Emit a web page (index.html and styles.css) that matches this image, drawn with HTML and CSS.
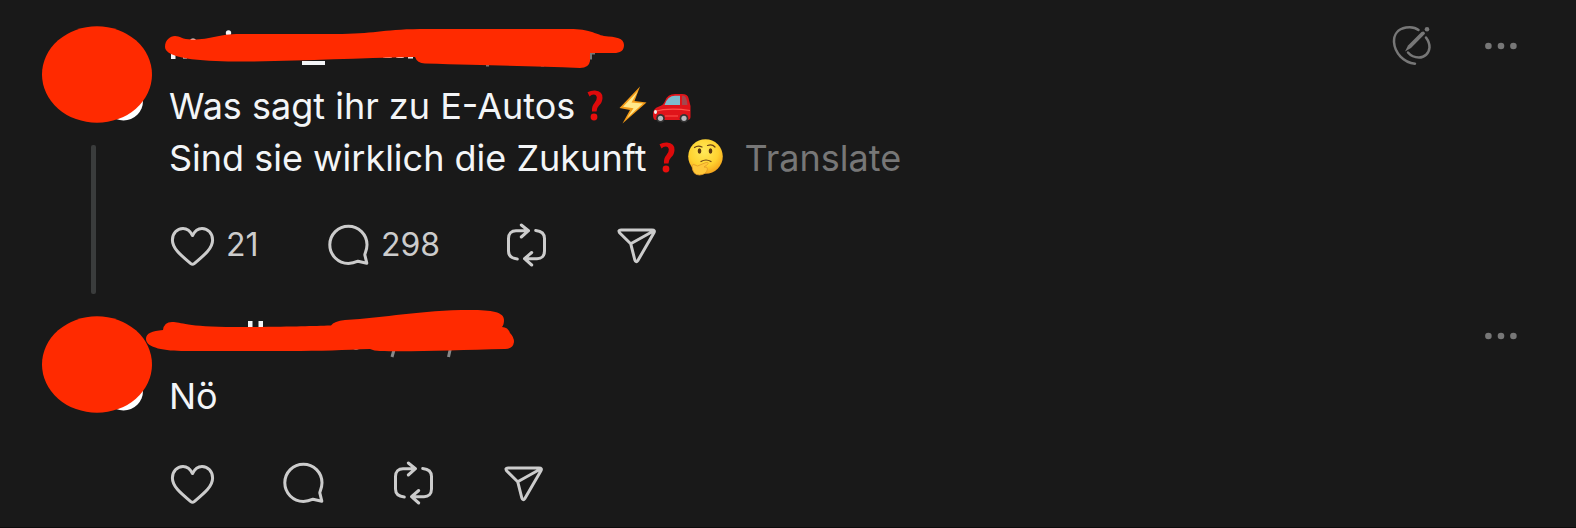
FILE: index.html
```html
<!DOCTYPE html>
<html lang="de">
<head>
<meta charset="utf-8">
<meta name="viewport" content="width=device-width, initial-scale=1">
<title>Thread</title>
<link rel="stylesheet" href="styles.css">
</head>
<body>
<svg class="defs" aria-hidden="true">
  <symbol id="heart" viewBox="0 0 48 48"><path d="M23.500 13.500C21.500 9.300 18 6.400 14 6.400C8 6.400 3.400 11.500 3.400 18C3.400 26 10.500 32.200 21.800 41.600Q23.500 43 25.200 41.600C36.500 32.200 43.600 26 43.600 18C43.600 11.500 39 6.400 33 6.400C29 6.400 25.500 9.300 23.500 13.500Z"/></symbol>
  <symbol id="comment" viewBox="0 0 48 48"><path d="M42.8 41.2L40.8 32.8C41 31 43 28 43 22.8A18.6 18.6 0 1 0 24.4 41.4C28 41.4 31 40.5 34 39.2Z"/></symbol>
  <symbol id="repost" viewBox="0 0 48 48"><path d="M15.300 37C10 36.500 6.500 34 6.500 29V16.500C6.500 11.500 9.500 8.700 14 8.700H26M19.300 3L26.500 8.700L19.300 15M33.700 8.500C39 9 42.500 11.500 42.500 16.500V29C42.500 34 39.500 36.700 35 36.700H23M29.700 30.500L22.500 36.700L29.700 43"/></symbol>
  <symbol id="share" viewBox="0 0 48 48"><path d="M7.800 11Q5.600 8 9 8H40Q43.600 8 41.800 11L26 38.300Q23.800 41.300 22.700 37.500L18.700 21.700ZM18.700 21.700L41.500 9"/></symbol>
  <symbol id="more" viewBox="0 0 48 48"><circle cx="11.400" cy="24" r="3.300"/><circle cx="24" cy="24" r="3.300"/><circle cx="36.400" cy="24" r="3.300"/></symbol>
  <symbol id="question" viewBox="0 0 38 38"><g stroke="none"><path d="M10.500 5.300Q14 3.300 18 3.500Q25.800 4 25.500 11Q25.300 15.500 22 18.500Q19.500 21 19.500 24.500H15Q14.500 19 17.500 16Q20 13 19.800 10.500Q19.500 7.500 16.500 7.500Q14.500 7.500 12.500 9.500Z" fill="#dd0a0b"/><circle cx="17" cy="30" r="3.400" fill="#e80f0d"/></g></symbol>
</svg>

<main class="thread">
  <article class="post">
    <div class="rail">
      <svg class="avatar" viewBox="0 0 111 97" role="img" aria-label="Avatar"><circle cx="81.500" cy="75" r="19.500" fill="#fff"/><ellipse cx="55" cy="48.500" rx="55" ry="48.300" fill="#ff2a00"/></svg>
      <span class="line"></span>
    </div>
    <div class="body">
      <header class="head">
        <svg class="redaction" viewBox="144 26 480 48" aria-hidden="true">
          <g fill="#f3f5f7"><circle cx="228.500" cy="33" r="2.700"/><circle cx="193" cy="42" r="3.500"/><path d="M171 54h4.500v5H171zM183 54h4v4.500h-4zM302 61h23v4h-23zM408 54h5v4.500h-5zM383 54h9v3.500q-4 1-9 0zM396 54h8v3.500q-4 1-8 0z"/></g>
          <path fill="#777" d="M486 62h3v4.500h-3zM541 62h3v4.500h-3zM589 53h6v1.500h-3v5h-3z"/>
          <path fill="#ff2a00" d="M165 47C165 40 170 36 175 36C180 36 182 39.500 192 39.500C212 39.500 218 34 240 34H335C375 34 380 29.500 420 29H570C590 29 595 34 604 36C616 37 624 38 624 45C624 51 620 53 614 53H590V61Q589 68 580 68C535 66 490 65.500 425 63.500Q417 63 415 57C350 58 300 61.500 235 61.500C200 61.500 165 58 165 47Z"/>
        </svg>
        <button class="icon-btn muted" aria-label="Bearbeiten">
          <svg class="icon" viewBox="0 0 48 48"><g stroke="currentColor" stroke-width="2.500"><path d="M29.500 8C26.500 5.500 21.500 4.800 17 5.500C8.500 7 4.700 13 5 20C5.700 31 14.700 40.500 26 41.700M37 15.500C39.500 19 40.700 22 40.500 25.500C40 31.500 35.500 35.500 30 35.500C25.500 35.500 21.500 33.500 19 30.500"/></g><path d="M16 29.500L19 23.500L32.500 10Q35.500 8.500 36 11.700L22 26Z" fill="currentColor"/><circle cx="38" cy="7.200" r="2.300" fill="currentColor"/></svg>
        </button>
        <button class="icon-btn muted" aria-label="Mehr"><svg class="icon dots"><use href="#more"/></svg></button>
      </header>
      <p class="text">Was sagt ihr zu E-Autos<span class="emojis"><svg class="emoji" role="img" aria-label="❓"><use href="#question"/></svg><svg class="emoji" viewBox="0 0 38 38" role="img" aria-label="⚡"><path d="M25 -.5L4.500 21L15 23L7.500 36.500L31.500 15.500L19.500 14Z" fill="#f39a17"/><path d="M23 4L8 19.800L18.500 21.300L12 31L28 16.500L16.500 15.500Z" fill="#ffe88a"/></svg><svg class="emoji" viewBox="0 0 38 38" role="img" aria-label="🚗"><path d="M0 28Q-.5 21.500 6 19.500Q10 18.500 12 14Q14.500 7 22 7H29Q34.500 7 35.500 11L37.500 19V30Q37.500 33 34 33H3Q0 33 0 28Z" fill="#e0141a"/><path d="M11.500 18Q14.500 8.700 22 8.700H27V18Z" fill="#7cbccd"/><path d="M29 8.700H31Q33.500 9 34.500 18H29Z" fill="#a3474e"/><path d="M1 24.500Q16 20.500 37 23.500M12 29H25" fill="none" stroke="#ff554c" stroke-width="1.200"/><circle cx="7.500" cy="31.300" r="4.300" fill="#333"/><circle cx="31" cy="31.300" r="4.300" fill="#333"/><circle cx="7.500" cy="31.300" r="2.600" fill="#b9b9bd"/><circle cx="31" cy="31.300" r="2.600" fill="#b9b9bd"/><ellipse cx="2.500" cy="25" rx="1.500" ry="2" fill="#eee"/></svg></span><br>
      Sind sie wirklich die Zukunft<span class="emojis"><svg class="emoji" role="img" aria-label="❓"><use href="#question"/></svg><svg class="emoji" viewBox="0 0 38 38" role="img" aria-label="🤔"><defs><radialGradient id="face" cx=".45" cy=".35" r=".65"><stop offset="0" stop-color="#ffe95a"/><stop offset=".65" stop-color="#ffd22f"/><stop offset="1" stop-color="#f5a51d"/></radialGradient></defs><circle cx="18.500" cy="17.500" r="17.300" fill="url(#face)"/><ellipse cx="12.500" cy="12" rx="1.800" ry="2.700" fill="#5b3710"/><ellipse cx="23.500" cy="12" rx="1.800" ry="2.700" fill="#5b3710"/><path d="M7.500 8.500Q11 6 15 8M20.500 6.500Q25 4.500 28 8M14 22.500Q19 19.500 24 22.500" fill="none" stroke="#6b4214" stroke-width="1.200" stroke-linecap="round"/><path d="M5 27Q5.500 24.500 8 26L10.500 27L19 23.500Q22.500 23 20.500 25.500L17 28Q20.500 27.500 20.500 30Q19.500 35.500 12.500 36Q5.500 36 5 27Z" fill="#ffc83a" stroke="#e39a27" stroke-width=".8"/></svg></span><button class="translate">Translate</button></p>
      <div class="actions">
        <button class="action" aria-label="Gefällt mir, 21"><svg class="icon"><use href="#heart"/></svg><span class="count">21</span></button>
        <button class="action" aria-label="Antworten, 298"><svg class="icon"><use href="#comment"/></svg><span class="count">298</span></button>
        <button class="action" aria-label="Reposten"><svg class="icon"><use href="#repost"/></svg></button>
        <button class="action" aria-label="Teilen"><svg class="icon"><use href="#share"/></svg></button>
      </div>
    </div>
  </article>

  <article class="post">
    <div class="rail">
      <svg class="avatar" viewBox="0 0 111 97" role="img" aria-label="Avatar"><circle cx="81.500" cy="75" r="19.500" fill="#fff"/><ellipse cx="55" cy="48.500" rx="55" ry="48.300" fill="#ff2a00"/></svg>
    </div>
    <div class="body">
      <header class="head">
        <svg class="redaction" viewBox="144 316 480 48" aria-hidden="true">
          <path fill="#f3f5f7" d="M248 321h4.500v8H248zM258.500 321h4.500v8h-4.500z"/>
          <path fill="none" stroke="#888" stroke-width="3" d="M394.500 348L392 357M450.500 348L448.500 357M353 347q3 3 6 0"/>
          <path fill="#ff2a00" d="M146 339C146 333 152 331 163 330Q164 322 172 322C182 322 185 327 235 327C290 327 310 326 331 325.500Q334 321 345 320C385 318 420 310 470 310C492 310 504 312 504 320Q504 325 502 327Q508 327 510 333Q514 337 514 342Q513 349 505 349C460 350 410 352 380 351Q374 351 370 349C345 350 320 351 290 351H185C165 351 146 348 146 339Z"/>
        </svg>
        <button class="icon-btn muted" aria-label="Mehr"><svg class="icon dots"><use href="#more"/></svg></button>
      </header>
      <p class="text">Nö</p>
      <div class="actions">
        <button class="action" aria-label="Gefällt mir"><svg class="icon"><use href="#heart"/></svg></button>
        <button class="action" aria-label="Antworten"><svg class="icon"><use href="#comment"/></svg></button>
        <button class="action" aria-label="Reposten"><svg class="icon"><use href="#repost"/></svg></button>
        <button class="action" aria-label="Teilen"><svg class="icon"><use href="#share"/></svg></button>
      </div>
    </div>
  </article>
</main>
</body>
</html>
```
FILE: styles.css
```css
* {
  box-sizing: border-box;
}

body {
  margin: 0;
  background: #191919;
  color: #f3f5f7;
  font-family: Inter, "Liberation Sans", sans-serif;
}

button {
  margin: 0;
  padding: 0;
  border: 0;
  background: none;
  color: inherit;
  font: inherit;
  cursor: pointer;
}

.defs {
  display: none;
}

.thread {
  padding-top: 4px;
  border-bottom: 1px solid #0c0c0c;
}

.post {
  display: grid;
  grid-template-columns: 110px minmax(0, 1fr);
  column-gap: 17px;
  padding: 22px 51px 0 42px;
}

.rail {
  display: flex;
  flex-direction: column;
  gap: 22px;
}

.avatar {
  flex: none;
  width: 111px;
  height: 97px;
}

.line {
  flex: 1;
  width: 5px;
  margin-left: 49px;
  border-radius: 2px;
  background: #3a3c3c;
}

.body {
  padding-bottom: 24px;
}

.post:last-child .body {
  padding-bottom: 19px;
}

.head {
  position: relative;
  display: flex;
  align-items: center;
  justify-content: flex-end;
  gap: 40px;
  height: 40px;
}

.redaction {
  position: absolute;
  top: 0;
  left: -25px;
  width: 480px;
  height: 48px;
  overflow: visible;
}

.icon-btn {
  display: flex;
}

.muted {
  color: #777;
}

.icon {
  display: block;
  flex: none;
  width: 48px;
  height: 48px;
  fill: none;
  stroke: #ccc;
  stroke-width: 3px;
  stroke-linecap: round;
  stroke-linejoin: round;
}

.muted .icon {
  stroke: none;
}

.dots {
  fill: currentColor;
}

.text {
  margin: 14px 0 38px;
  font-size: 36px;
  line-height: 52px;
}

.emojis {
  margin-left: 2px;
}

.emoji {
  width: 38px;
  height: 38px;
  vertical-align: -6px;
  overflow: visible;
}

.translate {
  margin-left: 20px;
  color: #777;
}

.actions {
  display: flex;
  gap: 62px;
}

.action {
  display: flex;
  align-items: center;
  gap: 9px;
  color: #ccc;
}

.count {
  min-width: 36px;
  padding-bottom: 2px;
  font-size: 32px;
  line-height: 40px;
  text-align: left;
}
```
